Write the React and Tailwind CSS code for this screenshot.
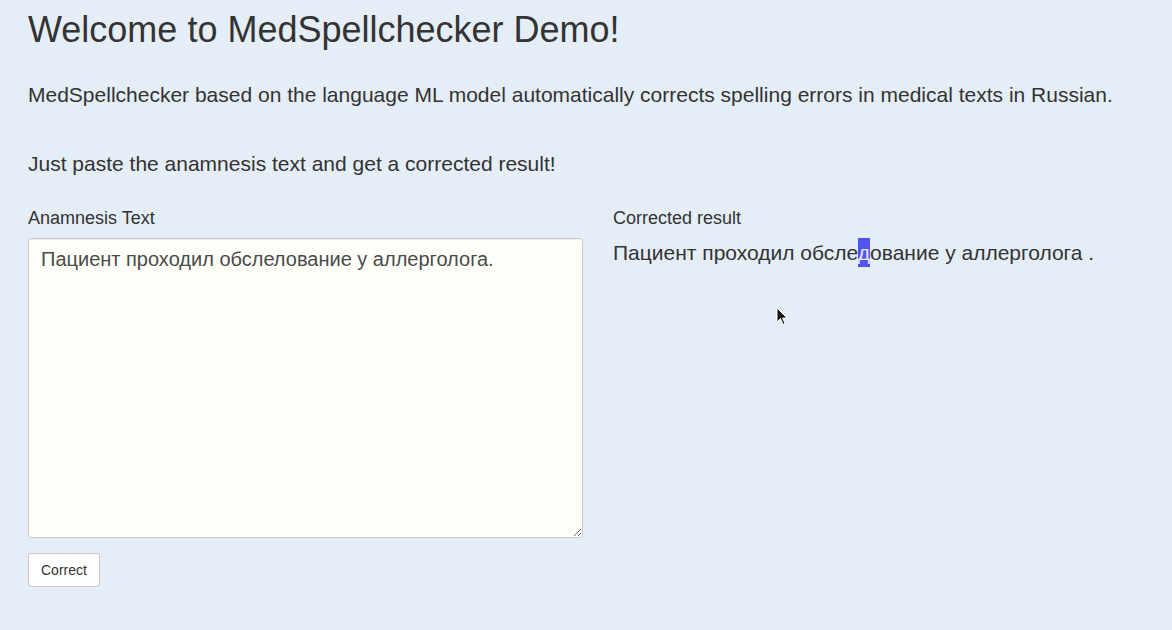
export default function App() {
  return (
    <div className="min-h-screen w-full bg-[#e5eef7] text-[#333] font-['Liberation_Sans',Arial,sans-serif] relative">
      <div className="px-[28px] pt-[8px]">
        <h1 className="text-[36px] leading-[44px] font-normal">Welcome to MedSpellchecker Demo!</h1>
        <p className="mt-[28px] text-[21px] leading-[30px]">
          MedSpellchecker based on the language ML model automatically corrects spelling errors in medical texts in Russian.
        </p>
        <p className="mt-[39px] text-[21px] leading-[30px]">
          Just paste the anamnesis text and get a corrected result!
        </p>

        <div className="mt-[28px] grid grid-cols-[555px_1fr] gap-[30px]">
          <div>
            <div className="text-[18px] leading-[22px]">Anamnesis Text</div>
            <textarea
              className="mt-[9px] block w-full h-[300px] bg-[#fffffa] border border-[#c8c8c8] rounded-[3px] px-[12px] py-[7px] text-[20px] leading-[26px] text-[#4a4a4a] shadow-[inset_0_1px_1px_rgba(0,0,0,0.05)] outline-none"
              defaultValue="Пациент проходил обслелование у аллерголога."
            />
            <button className="mt-[15px] h-[34px] px-[12px] bg-white border border-[#c8c8c8] rounded-[3px] text-[14px] text-[#333]">
              Correct
            </button>
          </div>
          <div>
            <div className="text-[18px] leading-[22px]">Corrected result</div>
            <p className="mt-[9px] text-[21px] leading-[30px]">
              Пациент проходил обсле<span className="bg-[#5353f2] text-[#e8e8ff] py-[3px]">д</span>ование у аллерголога .
            </p>
          </div>
        </div>
      </div>

      <svg className="absolute left-[776px] top-[307px]" width="12" height="19" viewBox="0 0 12 19">
        <path d="M1 1 L1 15 L4.5 11.5 L7 17.5 L9 16.6 L6.6 11 L11 11 Z" fill="#111" stroke="#fff" strokeWidth="1" />
      </svg>
    </div>
  );
}
